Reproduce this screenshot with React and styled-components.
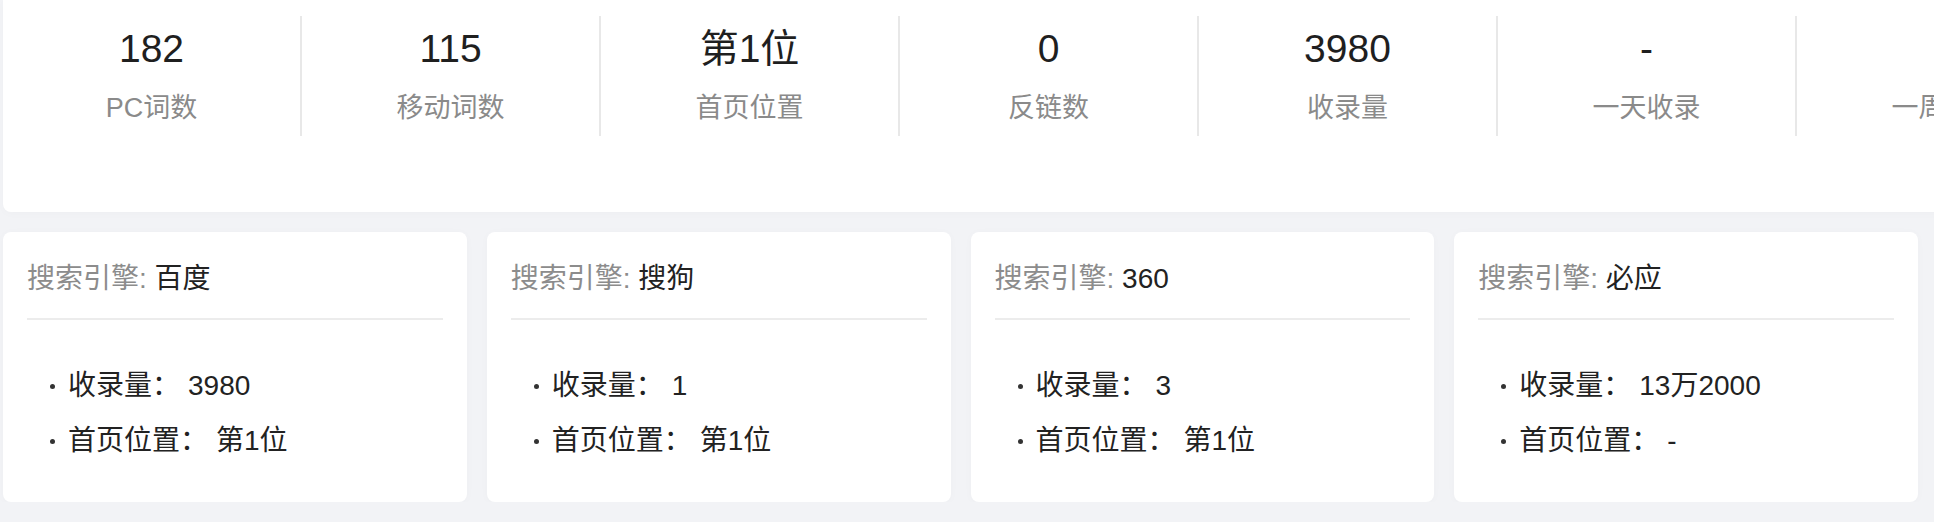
import React from "react";
import styled, { createGlobalStyle } from "styled-components";

const GlobalStyle = createGlobalStyle`
  html, body {
    margin: 0;
    padding: 0;
    background: #f2f3f6;
    overflow: hidden;
  }
  body {
    font-family: "Liberation Sans", "Noto Sans CJK SC", sans-serif;
  }
`;

const Page = styled.div`
  width: 1915px;
  padding-left: 3px;
`;

const OverviewCard = styled.div`
  background: #fff;
  border-radius: 0 0 8px 8px;
  padding: 16px 0 76px;
  margin-right: -60px;
  box-shadow: 0 2px 10px rgba(0, 0, 0, 0.02);
`;

const StatRow = styled.div`
  display: flex;
`;

const StatItem = styled.div`
  flex: 0 0 299px;
  box-sizing: border-box;
  height: 120px;
  padding-top: 10px;
  border-right: 2px solid #e8e8e8;
  text-align: center;
`;

const StatValue = styled.div`
  font-size: 39px;
  line-height: 46px;
  color: #1f1f1f;
`;

const StatLabel = styled.div`
  margin-top: 18px;
  font-size: 27px;
  line-height: 36px;
  color: #8a8a8a;
`;

const EngineGrid = styled.div`
  margin-top: 20px;
  display: grid;
  grid-template-columns: repeat(4, 1fr);
  gap: 20px;
`;

const EngineCard = styled.div`
  background: #fff;
  border-radius: 8px;
  padding: 27px 24px 41px;
  box-shadow: 0 1px 10px rgba(0, 0, 0, 0.025);
`;

const EngineHeader = styled.div`
  font-size: 28px;
  line-height: 40px;
  color: #222;
  padding-bottom: 19px;
  border-bottom: 2px solid #ececec;
  white-space: nowrap;
`;

const HeaderLabel = styled.span`
  color: #8c8c8c;
`;

const MetricList = styled.ul`
  list-style: none;
  margin: 0;
  padding: 46px 0 0;
`;

const MetricItem = styled.li`
  display: flex;
  align-items: center;
  font-size: 28px;
  line-height: 40px;
  color: #222;
  white-space: nowrap;
  & + & {
    margin-top: 15px;
  }
  &::before {
    content: "";
    width: 5px;
    height: 5px;
    border-radius: 50%;
    background: #333;
    margin: 0 13px 0 23px;
    flex-shrink: 0;
  }
`;

const MetricValue = styled.span`
  margin-left: 8px;
`;

const stats = [
  { value: "182", label: "PC词数" },
  { value: "115", label: "移动词数" },
  { value: "第1位", label: "首页位置" },
  { value: "0", label: "反链数" },
  { value: "3980", label: "收录量" },
  { value: "-", label: "一天收录" },
  { value: "-", label: "一周收录" },
];

const engines = [
  { name: "百度", count: "3980", rank: "第1位" },
  { name: "搜狗", count: "1", rank: "第1位" },
  { name: "360", count: "3", rank: "第1位" },
  { name: "必应", count: "13万2000", rank: "-" },
];

const App = () => {
  return (
    <>
      <GlobalStyle />
      <Page>
        <OverviewCard>
          <StatRow>
            {stats.map((s) => (
              <StatItem key={s.label}>
                <StatValue>{s.value}</StatValue>
                <StatLabel>{s.label}</StatLabel>
              </StatItem>
            ))}
          </StatRow>
        </OverviewCard>
        <EngineGrid>
          {engines.map((e) => (
            <EngineCard key={e.name}>
              <EngineHeader>
                <HeaderLabel>搜索引擎: </HeaderLabel>
                {e.name}
              </EngineHeader>
              <MetricList>
                <MetricItem>
                  <span>收录量：</span>
                  <MetricValue>{e.count}</MetricValue>
                </MetricItem>
                <MetricItem>
                  <span>首页位置：</span>
                  <MetricValue>{e.rank}</MetricValue>
                </MetricItem>
              </MetricList>
            </EngineCard>
          ))}
        </EngineGrid>
      </Page>
    </>
  );
};

export default App;
